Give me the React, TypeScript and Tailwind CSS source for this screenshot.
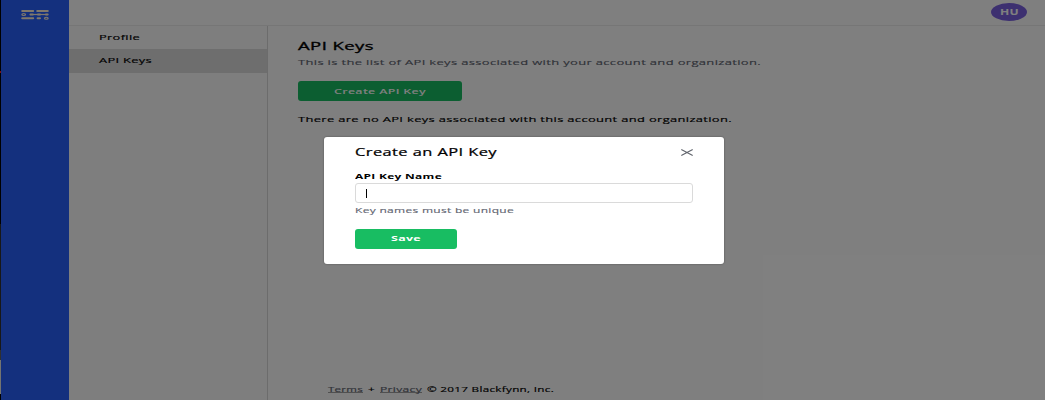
import { useLayoutEffect, useRef, type ReactNode } from "react";

/** Extended-width text: stretches its content to fill the width of the box. */
function Wide({ className, children }: { className: string; children: ReactNode }) {
  const box = useRef<HTMLSpanElement>(null);
  const text = useRef<HTMLSpanElement>(null);
  useLayoutEffect(() => {
    if (!box.current || !text.current) return;
    text.current.style.transform = "none";
    const ratio = box.current.getBoundingClientRect().width / text.current.getBoundingClientRect().width;
    text.current.style.transform = `scaleX(${ratio})`;
  }, []);
  return (
    <span ref={box} className={`block text-left tracking-[0.025em] whitespace-nowrap ${className}`}>
      <span ref={text} className="inline-block origin-left">
        {children}
      </span>
    </span>
  );
}

function Logo() {
  return (
    <svg width="28" height="11" viewBox="0 0 28 11" fill="none" stroke="#fff0d8">
      <path d="M1.2 2H12.2M16.2 2H26.8M1.2 9.2H12.2M16.6 9.2H19" strokeWidth="2" strokeLinecap="round" />
      <path d="M9 5.5H27" strokeWidth="1.2" />
      <path d="M9.5 5.5H11.8M17 5.5H19M25 5.5H26.6" strokeWidth="2.2" strokeLinecap="round" />
      <ellipse cx="2.7" cy="5.5" rx="1.9" ry="1" strokeWidth="1.1" />
      <ellipse cx="25.3" cy="9.2" rx="1.9" ry="1" strokeWidth="1.1" />
    </svg>
  );
}

function ScreenEdge() {
  return (
    <div className="flex w-px shrink-0 flex-col bg-black">
      <div className="h-[71px]" />
      <div className="h-[2px] bg-[#ff2020]" />
      <div className="h-[151px]" />
      <div className="h-[126px] bg-[#303030]" />
      <div className="h-[10px] bg-[#606060]" />
      <div className="h-[34px] bg-[#e8e8e0]" />
    </div>
  );
}

export default function App() {
  return (
    <div className="relative flex h-[400px] w-[1045px] overflow-hidden bg-white font-['Open_Sans',sans-serif] text-black">
      <ScreenEdge />
      <aside className="flex w-[68px] shrink-0 justify-center bg-[#2860fc] pt-[9px]">
        <Logo />
      </aside>
      <div className="flex min-w-0 flex-1 flex-col">
        <header className="flex h-[26px] shrink-0 items-start justify-end border-b border-[#ececec] pt-[3px] pr-[18px]">
          <div className="flex h-[18px] w-9 items-center justify-center rounded-[50%] bg-[#7b61e0] text-white">
            <Wide className="w-[19px] text-[8px] leading-[18px] font-bold">HU</Wide>
          </div>
        </header>
        <div className="flex min-h-0 flex-1">
          <nav className="w-[199px] shrink-0 border-r border-[#d8d8d8] bg-[#fcfcfc] text-[8px] leading-[22px] font-medium [-webkit-text-stroke:0.15px]">
            <div className="h-[23px] pl-[30px]">
              <Wide className="w-[41px]">Profile</Wide>
            </div>
            <div className="h-6 bg-[#dcdcdc] pl-[30px]">
              <Wide className="w-[53px]">API Keys</Wide>
            </div>
          </nav>
          <main className="flex flex-1 flex-col pl-[30px]">
            <h1 className="pt-[13px] text-[10px] leading-[14px] font-medium [-webkit-text-stroke:0.3px]">
              <Wide className="w-[76px]">API Keys</Wide>
            </h1>
            <p className="mt-[3px] text-[7.8px] leading-[12px] font-medium text-[#606470] [-webkit-text-stroke:0.12px]">
              <Wide className="w-[463px]">This is the list of API keys associated with your account and organization.</Wide>
            </p>
            <button className="mt-[13px] flex h-[20px] w-[164px] items-center justify-center rounded-[3px] bg-[#18bd62] text-white">
              <Wide className="w-[92px] text-[7.8px] leading-[18px] font-semibold">Create API Key</Wide>
            </button>
            <p className="mt-[12px] text-[7.8px] leading-[12px] font-medium [-webkit-text-stroke:0.15px]">
              <Wide className="w-[434px]">There are no API keys associated with this account and organization.</Wide>
            </p>
            <footer className="mt-auto flex pb-[5px] pl-[30px] text-[7.3px] leading-[12px] font-medium [-webkit-text-stroke:0.15px]">
              <Wide className="h-[10px] w-[35px] border-b border-[#a0a0a0] text-[#606470]">Terms</Wide>
              <Wide className="ml-[5px] w-[7px]">+</Wide>
              <Wide className="ml-[5px] h-[10px] w-[42px] border-b border-[#a0a0a0] text-[#606470]">Privacy</Wide>
              <Wide className="ml-[5px] w-[127px]">© 2017 Blackfynn, Inc.</Wide>
            </footer>
          </main>
        </div>
      </div>

      <div className="absolute inset-0 flex items-start justify-center bg-black/50 pt-[137px] pl-[3px]">
        <section className="flex h-[127px] w-[400px] flex-col rounded-[3px] bg-white px-[31px] pt-2 shadow-[0_0_2px_rgba(0,0,0,0.4)]">
          <div className="flex h-[14px] items-center justify-between">
            <h2 className="text-[10px] leading-[14px] font-medium [-webkit-text-stroke:0.2px]">
              <Wide className="w-[142px]">Create an API Key</Wide>
            </h2>
            <svg width="12" height="7" viewBox="0 0 12 7" stroke="#60646c" strokeWidth="1.1">
              <path d="M0.3 0.5 11.7 6.5M11.7 0.5 0.3 6.5" />
            </svg>
          </div>
          <label className="mt-[11px] text-[7.8px] leading-[12px] font-bold">
            <Wide className="w-[87px]">API Key Name</Wide>
          </label>
          <div className="mt-px flex h-[20px] w-[338px] shrink-0 items-center rounded-[3px] border border-[#dadada] pl-[10px]">
            <div className="h-[9px] w-px bg-black" />
          </div>
          <p className="mt-px text-[7.8px] leading-[12px] font-medium text-[#606470] [-webkit-text-stroke:0.12px]">
            <Wide className="w-[159px]">Key names must be unique</Wide>
          </p>
          <button className="mt-[13px] flex h-[20px] w-[102px] items-start justify-center rounded-[3px] bg-[#18bd62] text-white">
            <Wide className="w-[30px] text-[7.8px] leading-[18px] font-bold">Save</Wide>
          </button>
        </section>
      </div>
    </div>
  );
}
